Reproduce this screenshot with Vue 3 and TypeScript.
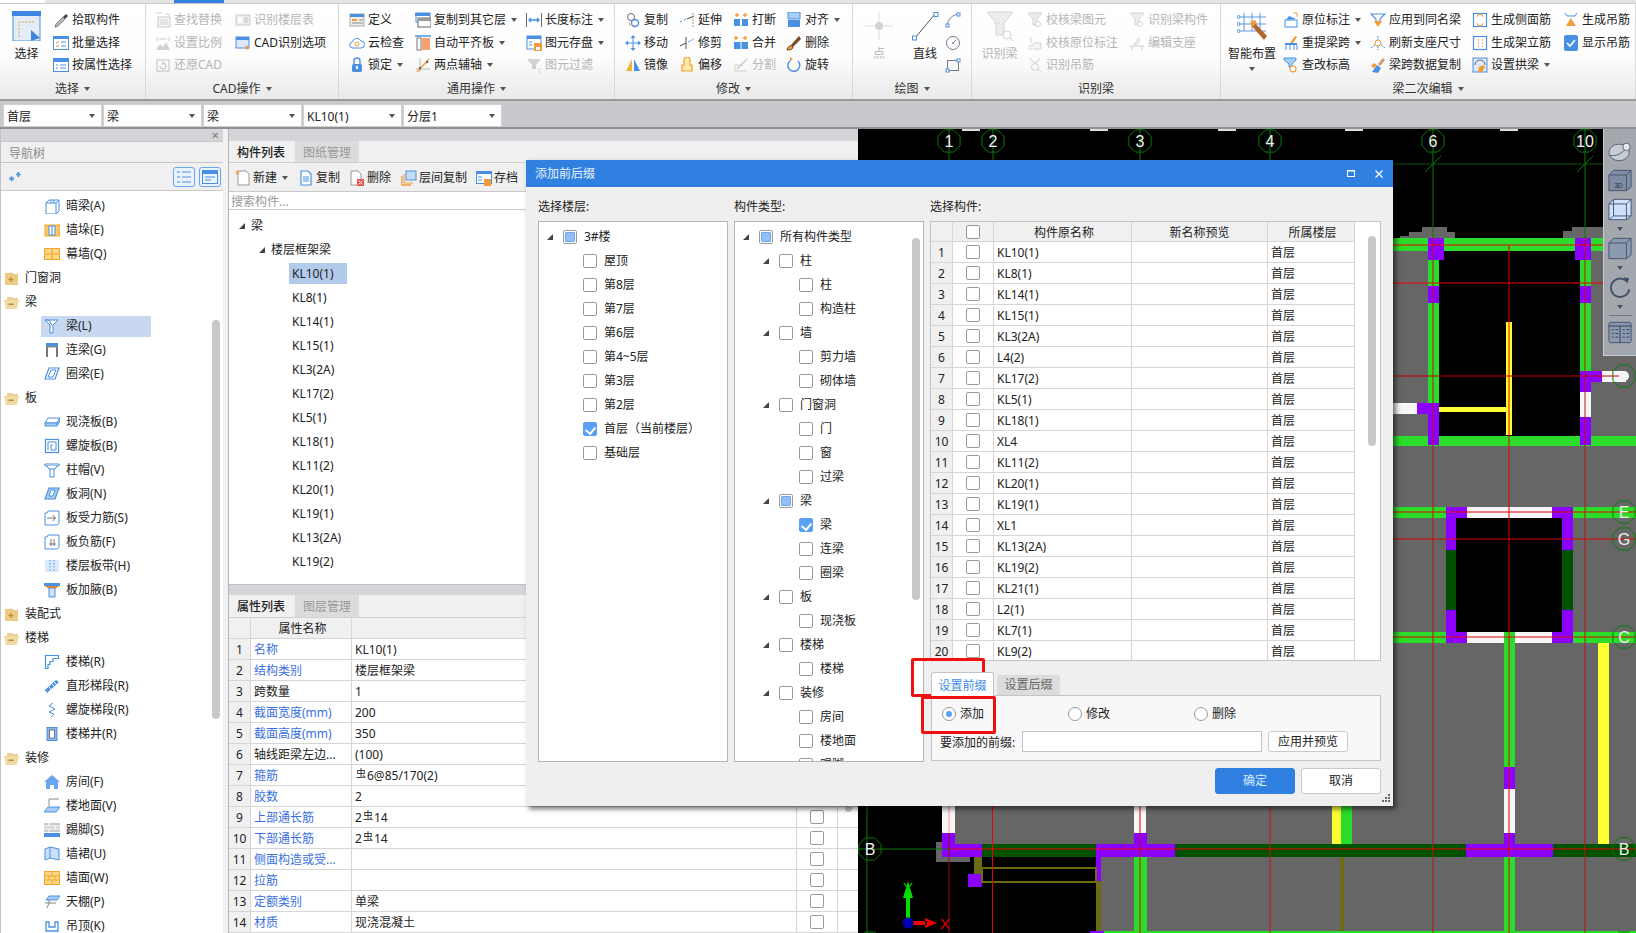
<script setup lang="ts">
// ---- icons, kept as svg fragments so the data tables below stay short
const B = '#4a90e2'
const O = '#f39a3a'
const icons: Record<string, string> = {
  pick: `<path d="M2 15l1-3 7-7 2 2-7 7z" fill="#bbb" stroke="#666" stroke-width=".8"/><path d="M10 5l3-3 2 2-3 3z" fill="#444"/>`,
  batch: `<rect x=".5" y="1.5" width="15" height="13" fill="#fff" stroke="${B}"/><rect y="1" width="16" height="3" fill="${B}"/><path d="M3 7l1 1 2-2M3 11l1 1 2-2" stroke="${O}" fill="none"/><path d="M8 7h5M8 11h5" stroke="${B}"/>`,
  attr: `<rect x=".5" y="1.5" width="15" height="13" fill="#fff" stroke="${B}"/><rect y="1" width="16" height="4" fill="${B}"/><path d="M3 8h2M7 8h6M3 11h2M7 11h6" stroke="${B}"/>`,
  find: `<rect x="3" y="5" width="12" height="10" fill="#eee" stroke="#999"/><path d="M5 8h8M5 10h8M5 12h8" stroke="#aaa"/><path d="M1 1h6M10 2h4v2" stroke="#aaa" fill="none"/>`,
  scale: `<path d="M1 15l4-6 3 3 3-5 4 8z" fill="#aaa"/><path d="M2 2v4M14 2v4M4 4h8" stroke="#999"/>`,
  restore: `<rect x="2" y="3" width="12" height="11" fill="none" stroke="#888"/><path d="M5 9a3 3 0 1 0 3-3M8 4v4" stroke="#888" fill="none"/>`,
  layertable: `<rect x="1" y="3" width="14" height="10" fill="#ddd" stroke="#999"/><rect x="3" y="5" width="4" height="6" fill="#fff"/><path d="M9 6h4M9 8h4M9 10h4" stroke="#888"/>`,
  cadopt: `<rect x="1" y="2" width="13" height="11" fill="#dbe9fa" stroke="${B}"/><rect x="1" y="2" width="13" height="3" fill="${B}"/><path d="M11 10l4 3-4 2z" fill="${O}"/>`,
  def: `<rect x="1" y="2" width="14" height="12" fill="#eee" stroke="#aaa"/><rect x="1" y="2" width="14" height="3" fill="${B}"/><rect x="3" y="7" width="5" height="2" fill="${O}"/><path d="M10 8h4M3 11h11" stroke="#888"/>`,
  cloud: `<path d="M4 13a3 3 0 0 1-.5-6A4.5 4.5 0 0 1 12 6a3.5 3.5 0 0 1 0 7z" fill="#fff" stroke="${B}"/><circle cx="8" cy="9" r="2" fill="none" stroke="${O}"/>`,
  lock: `<rect x="3" y="7" width="10" height="8" rx="1.5" fill="${B}"/><path d="M5 7V4a3 3 0 0 1 6 0v3" fill="none" stroke="${B}" stroke-width="1.4"/><rect x="7" y="9" width="2" height="3" fill="#fff"/>`,
  copyto: `<rect x="1" y="1" width="14" height="9" fill="#fff" stroke="${B}"/><rect y="1" width="15" height="3" fill="${B}"/><rect x="3" y="6" width="13" height="9" fill="#fff" stroke="#666"/><rect x="3" y="6" width="13" height="3" fill="#999"/>`,
  align: `<rect x="7" y="3" width="8" height="12" fill="#f7a26a"/><rect x="2" y="3" width="4" height="12" fill="#fff" stroke="#777"/><path d="M0 1h16" stroke="${B}" stroke-width="1.5"/>`,
  twopt: `<path d="M1 12h14M5 1v14" stroke="#bbb"/><path d="M2 15L14 2" stroke="${O}" stroke-width="1.3"/><circle cx="5" cy="11" r="1.2" fill="#666"/><circle cx="12" cy="5" r="1.2" fill="#666"/>`,
  len: `<path d="M.5 1v14M15.5 1v14" stroke="#666"/><path d="M3 8h10M5 6L3 8l2 2M11 6l2 2-2 2" stroke="${B}" fill="none" stroke-width="1.3"/>`,
  save: `<rect x="1" y="1" width="14" height="13" fill="#fff" stroke="${B}"/><rect x="1" y="1" width="14" height="3" fill="${B}"/><path d="M3 7h3M3 10h3" stroke="${B}"/><rect x="8" y="8" width="8" height="8" fill="${O}"/><rect x="10" y="12" width="4" height="3" fill="#fff"/>`,
  filter: `<path d="M1 2h14L10 8v4H6V8z" fill="#aaa"/><path d="M12 12h3M12 15h3" stroke="#aaa"/>`,
  copy: `<circle cx="6" cy="5" r="3.5" fill="none" stroke="#667"/><circle cx="10" cy="11" r="3.5" fill="none" stroke="${B}" stroke-width="1.4"/><path d="M4 10l1 4" stroke="${O}"/>`,
  extend: `<path d="M1 10l2-1M5 8l2-1" stroke="${B}"/><path d="M8 7l7-3" stroke="#444"/><path d="M14 1v14" stroke="#999" stroke-dasharray="2 1"/>`,
  breakit: `<rect x="1" y="7" width="6" height="7" fill="${B}"/><rect x="9" y="7" width="6" height="7" fill="${B}"/><path d="M4 1v4M2 3h4M12 1v4M10 3h4" stroke="${O}" stroke-width="1.3"/>`,
  alignto: `<rect x="2" y="0" width="12" height="7" fill="#a8cdf6" stroke="${B}"/><rect x="2" y="8" width="12" height="7" fill="${B}"/>`,
  move: `<path d="M8 1v14M1 8h14" stroke="${B}"/><path d="M8 0l2.5 3h-5zM8 16l2.5-3h-5zM0 8l3-2.5v5zM16 8l-3-2.5v5z" fill="${B}"/>`,
  trim: `<path d="M1 11l6-3" stroke="#444"/><path d="M9 7l6-3" stroke="${B}" stroke-dasharray="2 1"/><path d="M7 2v12" stroke="#555"/>`,
  merge: `<rect x="1" y="7" width="14" height="7" fill="${B}"/><path d="M8 7v7" stroke="#fff"/><path d="M3 1v4M1 3h4M12 1v4M10 3h4" stroke="${O}" stroke-width="1.3"/>`,
  erase: `<path d="M13 1L5 10l2 2 8-8z" fill="#7a4a22"/><path d="M1 15c1-4 3-5 5-4l1 1c0 2-2 3-6 3z" fill="${O}" stroke="#642"/>`,
  mirror: `<path d="M7 2v12H1z" fill="#f2b431"/><path d="M9 2v12h6z" fill="${B}"/>`,
  offset: `<path d="M3 14V8h2V3a2 2 0 0 1 6 0v5h2v6z" fill="#ffe9b0" stroke="#f0a020" stroke-width="1.2"/>`,
  split: `<path d="M2 14h12M2 14V8h8" stroke="#aaa" fill="none"/><path d="M4 12L14 2" stroke="#999" stroke-width="1.4"/>`,
  rotate: `<path d="M12 4a6 6 0 1 1-7-1" fill="none" stroke="${B}" stroke-width="1.4"/><path d="M4 0l3 2-3 2z" fill="${O}"/>`,
  arc: `<path d="M2 14C3 7 7 3 14 2" fill="none" stroke="#778"/><rect x="1" y="12" width="3" height="3" fill="#fff" stroke="${B}"/><rect x="12" y="1" width="3" height="3" fill="#fff" stroke="${B}"/>`,
  circ: `<circle cx="8" cy="8" r="6.5" fill="none" stroke="#778"/><path d="M8 8l3-3" stroke="#778"/><circle cx="8" cy="8" r="1" fill="${B}"/>`,
  rect: `<rect x="2.5" y="3.5" width="11" height="10" fill="none" stroke="#778"/><rect x="1" y="12" width="3" height="3" fill="#fff" stroke="${B}"/><rect x="12" y="2" width="3" height="3" fill="#fff" stroke="${B}"/>`,
  chk: `<path d="M1 1h14l-5 6v6H6V7z" fill="#ddd" stroke="#aaa"/><circle cx="11" cy="12" r="2.5" fill="#fff" stroke="#aaa"/>`,
  chk2: `<path d="M1 14h4M1 11h4l2-3h7v6H6" fill="#eee" stroke="#aaa"/><path d="M4 2v6" stroke="#aaa"/>`,
  hang: `<path d="M3 1l3 4h4l3-4" fill="none" stroke="#aaa"/><circle cx="8" cy="10" r="3.5" fill="none" stroke="#aaa"/><path d="M11 12l3 3" stroke="#aaa"/>`,
  seat: `<path d="M1 11h14M3 15V11M13 15V11" stroke="#999"/><path d="M4 10l5-8 3 3-4 5z" fill="#ccc"/>`,
  mark: `<rect x="2" y="8" width="12" height="7" fill="#fff" stroke="${B}"/><path d="M3 8l3-4 7 3" fill="${B}"/><path d="M10 1h4v4" stroke="${O}" fill="none"/>`,
  refetch: `<path d="M2 8h12v2H2z" fill="${B}"/><path d="M3 10v5M7 10v5M11 10v5M14 10v5" stroke="${B}"/><path d="M7 8l5-7 2 1-4 6z" fill="${O}"/>`,
  elev: `<path d="M1 1h12v2L9 7v3H6V7L1 3z" fill="#a8cdf6" stroke="${B}"/><circle cx="10" cy="12" r="3" fill="#fff" stroke="${O}" stroke-width="1.2"/>`,
  same: `<path d="M1 2h14L10 7v3H6V7z" fill="#fff" stroke="${B}" stroke-width="1.2"/><path d="M4 9h8l-4 6z" fill="${O}"/>`,
  refresh: `<circle cx="8" cy="8" r="3" fill="#fff" stroke="${O}"/><path d="M8 1v4M8 11v4M1 13l4-3M15 13l-4-3" stroke="${B}" stroke-dasharray="2 1"/>`,
  spandata: `<path d="M2 15l5-7 4 3-3 5z" fill="${B}"/><path d="M8 7l5-6 2 2-5 6z" fill="#c96"/><path d="M1 9l3-3 3 2-3 3z" fill="${O}"/>`,
  side: `<rect x="1.5" y="1.5" width="13" height="13" fill="#fff" stroke="${B}" stroke-width="1.2"/><path d="M5 5a1 1 0 0 1 6 0M5 11a1 1 0 0 0 6 0" fill="none" stroke="${O}"/>`,
  vert: `<rect x="1.5" y="1.5" width="13" height="13" fill="#fff" stroke="${B}" stroke-width="1.2"/><path d="M6 5h1M6 8h1M6 11h1M10 5h1M10 8h1M10 11h1" stroke="${O}" stroke-width="1.4"/>`,
  arch: `<rect x="1" y="1" width="14" height="14" fill="#dbe9fa" stroke="${B}"/><path d="M3 8a5 5 0 0 1 10 0" fill="none" stroke="#666"/><path d="M6 15l1-5 4-2 2 2-3 5z" fill="${O}"/>`,
  hanggen: `<path d="M2 1l2 3h8l2-3" fill="none" stroke="${B}"/><path d="M8 6l5 8H3z" fill="${O}"/>`,
  show: `<rect x="1" y="0" width="14" height="16" rx="2" fill="${B}"/><path d="M4 8l3 3 5-6" fill="none" stroke="#fff" stroke-width="1.6"/>`,
  // nav tree
  dark: `<path d="M2 5l3-3h10v11l-3 3H2z" fill="#fff" stroke="${B}"/><path d="M2 5h10v11M12 5l3-3M7 2v3M10 2v3" fill="none" stroke="${B}"/>`,
  pier: `<rect x="1" y="3" width="15" height="11" fill="#f8c66a" stroke="#f5a623"/><rect x="5" y="4" width="6" height="9" fill="#fff" stroke="${B}"/><path d="M8 4v9" stroke="${B}"/>`,
  curtain: `<rect x=".5" y="2.5" width="15" height="11" fill="#fcd78a" stroke="#f5a623"/><path d="M0 8h16M8 3v11" stroke="#f5a623" stroke-width="1.2"/>`,
  beam: `<path d="M1 2h13L9 7v8H6V7z" fill="#fff" stroke="${B}"/><path d="M1 2l4 0 3 5" fill="none" stroke="${B}"/>`,
  link: `<rect x="2" y="1" width="12" height="3" fill="${B}"/><rect x="2" y="4" width="12" height="1.5" fill="#888"/><path d="M3 5v10M13 5v10" stroke="#777" stroke-width="2"/>`,
  ring: `<path d="M5 2h10l-4 11H1z" fill="#fff" stroke="${B}" stroke-width="1.2"/><path d="M7 4h5l-3 7H4z" fill="none" stroke="${B}"/>`,
  slab: `<path d="M4 4h12l-3 5H1z" fill="#fff" stroke="${B}"/><path d="M1 9h12v3H1zM13 9l3-5v3l-3 5" fill="#a8cdf6" stroke="${B}"/>`,
  spiral: `<rect x="1.5" y="1.5" width="13" height="13" fill="#fff" stroke="${B}" stroke-width="1.2"/><path d="M4 12V4h8v8H7V7h2" fill="none" stroke="${B}"/>`,
  cap: `<path d="M1 2h14v2H1z" fill="#fff" stroke="${B}"/><path d="M3 4l2 3h6l2-3M6 7v8h4V7" fill="#fff" stroke="${B}"/>`,
  hole: `<path d="M5 2h10l-4 11H1z" fill="#a8cdf6" stroke="${B}" stroke-width="1.2"/><path d="M7 4h4l-2 6H5z" fill="#fff" stroke="${B}"/>`,
  rebar: `<path d="M3 3l1-2h11v12l-2 2H1V3z" fill="#fff" stroke="${B}"/><path d="M3 8h9M9 5l2 3-2 3" fill="none" stroke="#777"/>`,
  nrebar: `<path d="M3 3l1-2h11v12l-2 2H1V3z" fill="#fff" stroke="${B}"/><path d="M5 10h7M7 5v7M10 5v7" fill="none" stroke="#777"/>`,
  strip: `<rect x="1" y="2" width="14" height="12" fill="#dbe9fa"/><path d="M6 2v12M10 2v12" stroke="${B}" stroke-dasharray="1.5 1.5"/>`,
  haunch: `<path d="M0 1h16v3H0z" fill="${B}"/><path d="M1 4h14l-4 3H5z" fill="#f5821f"/><path d="M5 6h6v9H5z" fill="#cfe2f8" stroke="${B}"/>`,
  stair: `<path d="M1.5 1.5h13v3H9v3H6v3H4v4H1.5z" fill="#fff" stroke="${B}" stroke-width="1.2"/>`,
  straight: `<path d="M1 12L12 2l3 2-11 10z" fill="${B}"/><path d="M5 9l2 2M8 6l2 2M10 4l2 2" stroke="#fff"/><path d="M1 12l3 3" stroke="${B}"/>`,
  helix: `<path d="M9 1L5 4l6 3-6 3 5 2-3 3" fill="none" stroke="${B}"/>`,
  well: `<rect x="3" y="1.5" width="10" height="13" fill="#8fb6e8" stroke="${B}"/><rect x="5.5" y="4" width="5" height="8" fill="#fff" stroke="#777"/>`,
  room: `<path d="M8 1L0 8h2v7h4v-4h4v4h4V8h2z" fill="#6aa5ef"/>`,
  floor: `<path d="M5 1h10M5 1v7" stroke="#888" fill="none"/><path d="M4 9h12l-4 5H0z" fill="#a8cdf6" stroke="${B}"/>`,
  skirt: `<rect y="1" width="16" height="9" fill="#ccc"/><path d="M0 4h16M0 7h16M5 1v3M11 4v3M5 7v3" stroke="#fff"/><rect y="11" width="16" height="4" fill="${B}"/>`,
  dado: `<path d="M1 3l5-2 9 2v11l-9-2-5 2z" fill="#c9dff8" stroke="${B}"/><path d="M6 1v11" stroke="${B}"/>`,
  wall: `<rect x=".5" y="1.5" width="15" height="13" fill="#fcd78a" stroke="#f5a623"/><path d="M1 6h14M1 10h14M8 2v4M5 6v4M11 6v4M8 10v4" stroke="#f5a623"/>`,
  ceil: `<path d="M5 2h11l-3 4H2z" fill="#a8cdf6" stroke="${B}"/><path d="M1 9h11M5 6v3M3 14l2-5" stroke="#888" fill="none"/>`,
  hang2: `<path d="M2 4v9h12V4h-3v5H5V4z" fill="#fff" stroke="${B}" stroke-width="1.3"/>`,
  // list toolbar
  newone: `<path d="M3 1h8l3 3v11H3z" fill="#fff" stroke="#999"/><path d="M1 1l3 3M4 1L1 4" stroke="${O}" stroke-width="1.4"/>`,
  dup: `<path d="M3 1h7l3 3v11H3z" fill="#fff" stroke="${B}" stroke-width="1.2"/><path d="M5 7h6M5 9h6M5 11h6" stroke="${B}"/>`,
  del: `<path d="M2 1h7l3 3v11H2z" fill="#fff" stroke="#999"/><rect x="8" y="9" width="7" height="7" fill="#e8504a"/><path d="M9.5 10.5l4 4M13.5 10.5l-4 4" stroke="#fff"/>`,
  floors: `<rect x="5" y="1" width="10" height="9" fill="#c5dcf8" stroke="${B}"/><path d="M1 6v9h9" fill="none" stroke="${O}" stroke-width="1.3"/><path d="M3 4v9h9" fill="none" stroke="${O}"/>`,
  archive: `<rect x=".5" y="1.5" width="15" height="12" fill="#fff" stroke="${B}"/><rect y="1" width="16" height="3" fill="${B}"/><path d="M2 7h4M2 10h4" stroke="${B}"/><rect x="8" y="9" width="7" height="7" fill="${O}"/>`,
  folderOpen: `<path d="M3 3h5l1 1h5v2H3z" fill="#e9cf95"/><path d="M0 6h15l-2 9H2z" fill="#f0d9a5"/><rect x="4.5" y="9.5" width="5" height="1.5" fill="#b88d3f"/>`,
  folderClosed: `<path d="M1 3h5l2-1 1 2h5v11H1z" fill="#edcb85"/><path d="M7 7v5M4.5 9.5h5" stroke="#c08e35" stroke-width="1.3"/>`,
}

type Cell = { t: string; ic: string; caret?: boolean; dis?: boolean }
type Col = { w: number; big?: boolean; bigCaret?: boolean; items: Cell[] }
type Group = { title: string; w: number; caret?: boolean; pad: number; cols: Col[] }

const groups: Group[] = [
  { title: '选择', w: 146, caret: true, pad: 0, cols: [
    { w: 53, big: true, items: [{ t: '选择', ic: 'bigselect' }] },
    { w: 90, items: [{ t: '拾取构件', ic: 'pick' }, { t: '批量选择', ic: 'batch' }, { t: '按属性选择', ic: 'attr' }] },
  ] },
  { title: 'CAD操作', w: 193, caret: true, pad: 9, cols: [
    { w: 80, items: [{ t: '查找替换', ic: 'find', dis: true }, { t: '设置比例', ic: 'scale', dis: true }, { t: '还原CAD', ic: 'restore', dis: true }] },
    { w: 100, items: [{ t: '识别楼层表', ic: 'layertable', dis: true }, { t: 'CAD识别选项', ic: 'cadopt' }] },
  ] },
  { title: '通用操作', w: 276, caret: true, pad: 10, cols: [
    { w: 66, items: [{ t: '定义', ic: 'def' }, { t: '云检查', ic: 'cloud' }, { t: '锁定', ic: 'lock', caret: true }] },
    { w: 111, items: [{ t: '复制到其它层', ic: 'copyto', caret: true }, { t: '自动平齐板', ic: 'align', caret: true }, { t: '两点辅轴', ic: 'twopt', caret: true }] },
    { w: 85, items: [{ t: '长度标注', ic: 'len', caret: true }, { t: '图元存盘', ic: 'save', caret: true }, { t: '图元过滤', ic: 'filter', dis: true }] },
  ] },
  { title: '修改', w: 238, caret: true, pad: 10, cols: [
    { w: 54, items: [{ t: '复制', ic: 'copy' }, { t: '移动', ic: 'move' }, { t: '镜像', ic: 'mirror' }] },
    { w: 54, items: [{ t: '延伸', ic: 'extend' }, { t: '修剪', ic: 'trim' }, { t: '偏移', ic: 'offset' }] },
    { w: 53, items: [{ t: '打断', ic: 'breakit' }, { t: '合并', ic: 'merge' }, { t: '分割', ic: 'split', dis: true }] },
    { w: 60, items: [{ t: '对齐', ic: 'alignto', caret: true }, { t: '删除', ic: 'erase' }, { t: '旋转', ic: 'rotate' }] },
  ] },
  { title: '绘图', w: 119, caret: true, pad: 0, cols: [
    { w: 52, big: true, items: [{ t: '点', ic: 'bigpoint', dis: true }] },
    { w: 40, big: true, items: [{ t: '直线', ic: 'bigline' }] },
    { w: 20, items: [{ t: '', ic: 'arc' }, { t: '', ic: 'circ' }, { t: '', ic: 'rect' }] },
  ] },
  { title: '识别梁', w: 249, pad: 0, cols: [
    { w: 55, big: true, items: [{ t: '识别梁', ic: 'bigrec', dis: true }] },
    { w: 102, items: [{ t: '校核梁图元', ic: 'chk', dis: true }, { t: '校核原位标注', ic: 'chk2', dis: true }, { t: '识别吊筋', ic: 'hang', dis: true }] },
    { w: 90, items: [{ t: '识别梁构件', ic: 'chk', dis: true }, { t: '编辑支座', ic: 'seat', dis: true }] },
  ] },
  { title: '梁二次编辑', w: 415, caret: true, pad: 0, cols: [
    { w: 62, big: true, bigCaret: true, items: [{ t: '智能布置', ic: 'bigsmart' }] },
    { w: 87, items: [{ t: '原位标注', ic: 'mark', caret: true }, { t: '重提梁跨', ic: 'refetch', caret: true }, { t: '查改标高', ic: 'elev' }] },
    { w: 102, items: [{ t: '应用到同名梁', ic: 'same' }, { t: '刷新支座尺寸', ic: 'refresh' }, { t: '梁跨数据复制', ic: 'spandata' }] },
    { w: 91, items: [{ t: '生成侧面筋', ic: 'side' }, { t: '生成架立筋', ic: 'vert' }, { t: '设置拱梁', ic: 'arch', caret: true }] },
    { w: 70, items: [{ t: '生成吊筋', ic: 'hanggen' }, { t: '显示吊筋', ic: 'show' }] },
  ] },
]

const bigIcons: Record<string, string> = {
  bigselect: `<rect x="1" y="1" width="27" height="29" fill="#e4ecf7" stroke="#4a90e2"/><rect x="0" y="0" width="29" height="5" fill="#3e86df"/><path d="M7 26V11h16" fill="none" stroke="#f39a3a" stroke-dasharray="2 1.5"/><path d="M19 19l9 8-9 3z" fill="#3e86df"/>`,
  bigpoint: `<path d="M15 1v28M1 15h28" stroke="#bbb"/><circle cx="15" cy="15" r="4" fill="#aaa"/>`,
  bigline: `<path d="M5 27L25 3" stroke="#555"/><rect x="2.5" y="25" width="4" height="4" fill="#fff" stroke="#4a90e2"/><rect x="24" y="1.5" width="4" height="4" fill="#fff" stroke="#4a90e2"/>`,
  bigrec: `<path d="M2 1h26l-9 11v12h-8V12z" fill="#ddd" stroke="#aaa"/><path d="M9 12l6 0" stroke="#bbb"/><circle cx="22" cy="24" r="4" fill="#fff" stroke="#aaa"/><path d="M25 27l3 3" stroke="#aaa"/>`,
  bigsmart: `<path d="M7 2v18M15 2v18M23 2v18M1 6h28M1 13h28M1 20h28" stroke="#5c97e0"/><circle cx="1.5" cy="6" r="1.5" fill="#fff" stroke="#4a90e2"/><circle cx="1.5" cy="13" r="1.5" fill="#fff" stroke="#4a90e2"/><circle cx="1.5" cy="20" r="1.5" fill="#fff" stroke="#4a90e2"/><path d="M14 14l3-3 13 14-3 4z" fill="#b5652b"/><path d="M13 11l5-2 2 3-5 4z" fill="#f39a3a"/>`,
}

const combos = ['首层', '梁', '梁', 'KL10(1)', '分层1']

type NavRow = { t: string; ic: string; top?: boolean; sel?: boolean }
const navRows: NavRow[] = [
  { t: '暗梁(A)', ic: 'dark' }, { t: '墙垛(E)', ic: 'pier' }, { t: '幕墙(Q)', ic: 'curtain' },
  { t: '门窗洞', ic: 'folderClosed', top: true },
  { t: '梁', ic: 'folderOpen', top: true },
  { t: '梁(L)', ic: 'beam', sel: true }, { t: '连梁(G)', ic: 'link' }, { t: '圈梁(E)', ic: 'ring' },
  { t: '板', ic: 'folderOpen', top: true },
  { t: '现浇板(B)', ic: 'slab' }, { t: '螺旋板(B)', ic: 'spiral' }, { t: '柱帽(V)', ic: 'cap' }, { t: '板洞(N)', ic: 'hole' },
  { t: '板受力筋(S)', ic: 'rebar' }, { t: '板负筋(F)', ic: 'nrebar' }, { t: '楼层板带(H)', ic: 'strip' }, { t: '板加腋(B)', ic: 'haunch' },
  { t: '装配式', ic: 'folderClosed', top: true },
  { t: '楼梯', ic: 'folderOpen', top: true },
  { t: '楼梯(R)', ic: 'stair' }, { t: '直形梯段(R)', ic: 'straight' }, { t: '螺旋梯段(R)', ic: 'helix' }, { t: '楼梯井(R)', ic: 'well' },
  { t: '装修', ic: 'folderOpen', top: true },
  { t: '房间(F)', ic: 'room' }, { t: '楼地面(V)', ic: 'floor' }, { t: '踢脚(S)', ic: 'skirt' }, { t: '墙裙(U)', ic: 'dado' },
  { t: '墙面(W)', ic: 'wall' }, { t: '天棚(P)', ic: 'ceil' }, { t: '吊顶(K)', ic: 'hang2' },
]

const listTools = [
  { t: '新建', ic: 'newone', w: 63, caret: true },
  { t: '复制', ic: 'dup', w: 51 },
  { t: '删除', ic: 'del', w: 52 },
  { t: '层间复制', ic: 'floors', w: 75 },
  { t: '存档', ic: 'archive', w: 60 },
]
const klNames = ['KL10(1)', 'KL8(1)', 'KL14(1)', 'KL15(1)', 'KL3(2A)', 'KL17(2)', 'KL5(1)', 'KL18(1)', 'KL11(2)', 'KL20(1)', 'KL19(1)', 'KL13(2A)', 'KL19(2)']

type Prop = { n: string; v: string; plain?: boolean; sym?: string; pre?: string; box?: boolean }
const props: Prop[] = [
  { n: '名称', v: 'KL10(1)' },
  { n: '结构类别', v: '楼层框架梁' },
  { n: '跨数量', v: '1', plain: true },
  { n: '截面宽度(mm)', v: '200' },
  { n: '截面高度(mm)', v: '350' },
  { n: '轴线距梁左边...', v: '(100)', plain: true },
  { n: '箍筋', v: '6@85/170(2)', sym: '虫', pre: '' },
  { n: '胶数', v: '2' },
  { n: '上部通长筋', v: '14', sym: '虫', pre: '2', box: true },
  { n: '下部通长筋', v: '14', sym: '虫', pre: '2', box: true },
  { n: '侧面构造或受...', v: '', box: true },
  { n: '拉筋', v: '', box: true },
  { n: '定额类别', v: '单梁', box: true },
  { n: '材质', v: '现浇混凝土', box: true },
]

type TreeRow = { t: string; lv: number; arrow?: boolean; state?: 'half' | 'on' }
const floorRows: TreeRow[] = [
  { t: '3#楼', lv: 0, arrow: true, state: 'half' },
  { t: '屋顶', lv: 1 }, { t: '第8层', lv: 1 }, { t: '第7层', lv: 1 }, { t: '第6层', lv: 1 }, { t: '第4~5层', lv: 1 },
  { t: '第3层', lv: 1 }, { t: '第2层', lv: 1 }, { t: '首层（当前楼层）', lv: 1, state: 'on' }, { t: '基础层', lv: 1 },
]
const typeRows: TreeRow[] = [
  { t: '所有构件类型', lv: 0, arrow: true, state: 'half' },
  { t: '柱', lv: 1, arrow: true }, { t: '柱', lv: 2 }, { t: '构造柱', lv: 2 },
  { t: '墙', lv: 1, arrow: true }, { t: '剪力墙', lv: 2 }, { t: '砌体墙', lv: 2 },
  { t: '门窗洞', lv: 1, arrow: true }, { t: '门', lv: 2 }, { t: '窗', lv: 2 }, { t: '过梁', lv: 2 },
  { t: '梁', lv: 1, arrow: true, state: 'half' }, { t: '梁', lv: 2, state: 'on' }, { t: '连梁', lv: 2 }, { t: '圈梁', lv: 2 },
  { t: '板', lv: 1, arrow: true }, { t: '现浇板', lv: 2 },
  { t: '楼梯', lv: 1, arrow: true }, { t: '楼梯', lv: 2 },
  { t: '装修', lv: 1, arrow: true }, { t: '房间', lv: 2 }, { t: '楼地面', lv: 2 }, { t: '踢脚', lv: 2 },
]
const partNames = ['KL10(1)', 'KL8(1)', 'KL14(1)', 'KL15(1)', 'KL3(2A)', 'L4(2)', 'KL17(2)', 'KL5(1)', 'KL18(1)', 'XL4', 'KL11(2)', 'KL20(1)', 'KL19(1)', 'XL1', 'KL13(2A)', 'KL19(2)', 'KL21(1)', 'L2(1)', 'KL7(1)', 'KL9(2)']
const radios = ['添加', '修改', '删除']

// ---- drawing on the CAD canvas, in page coordinates
const GRAY = '#666666'
const PUR = '#8b00ff'
const GRN = '#2bdc2b'
const DGR = '#005200'
const WHT = '#f7f7f7'
const YEL = '#ffff33'
const OLV = '#6b6b12'
const plan: [number, number, number, number, string][] = [
  [955, 251, 681, 593, GRAY], [1101, 857, 535, 80, GRAY], [936, 842, 34, 20, GRAY],
  [1422, 227, 25, 11, GRAY], [1409, 232, 46, 6, GRAY], [1400, 236, 55, 2, GRAY],
  [1572, 227, 31, 11, GRAY], [1563, 231, 40, 7, GRAY],
  [1439, 251, 141, 185, '#000'], [1456, 518, 106, 114, '#000'],
  // upper room
  [1393, 238, 243, 13, GRN], [1428, 238, 11, 208, GRN], [1580, 238, 11, 208, GRN],
  [1428, 238, 16, 22, PUR], [1575, 238, 16, 22, PUR], [1428, 286, 11, 17, PUR], [1580, 286, 11, 17, PUR],
  [1393, 436, 243, 10, GRN],
  [1393, 403, 24, 11, WHT], [1417, 403, 22, 11, PUR], [1428, 403, 11, 42, PUR],
  [1580, 371, 22, 11, PUR], [1580, 371, 11, 21, PUR], [1580, 392, 11, 25, WHT], [1580, 417, 11, 28, PUR],
  [1602, 371, 24, 11, WHT],
  [1506, 322, 6, 113, YEL], [1439, 407, 67, 5, YEL],
  // lift shaft
  [1393, 507, 243, 11, GRN], [1446, 507, 21, 11, PUR], [1467, 507, 85, 11, WHT], [1552, 507, 21, 11, PUR],
  [1446, 518, 10, 32, PUR], [1446, 550, 10, 60, DGR], [1446, 610, 10, 33, PUR],
  [1562, 518, 11, 32, PUR], [1562, 550, 11, 60, DGR], [1562, 610, 11, 33, PUR],
  [1393, 632, 243, 11, GRN], [1446, 632, 21, 11, PUR], [1467, 632, 85, 11, WHT], [1552, 632, 21, 11, PUR],
  [1504, 632, 11, 135, GRN], [1504, 767, 11, 22, PUR], [1504, 789, 11, 44, WHT], [1504, 833, 11, 11, PUR],
  [1598, 643, 11, 201, YEL], [1332, 800, 9, 44, YEL], [1341, 800, 11, 50, GRN],
  // lower band
  [982, 844, 654, 13, DGR], [1096, 844, 79, 13, PUR], [1466, 844, 87, 13, PUR],
  [1504, 857, 11, 80, GRN], [1134, 857, 13, 80, GRN], [1340, 857, 4, 80, OLV],
  [942, 800, 13, 33, WHT], [942, 833, 13, 24, PUR], [942, 844, 40, 13, PUR],
  [1134, 800, 12, 33, WHT], [1134, 833, 13, 11, PUR],
  [974, 857, 8, 17, OLV], [968, 874, 14, 13, PUR],
  [1096, 857, 5, 24, PUR], [1096, 881, 5, 50, OLV],
  [1104, 931, 532, 6, GRN], [1090, 931, 14, 6, PUR],
]
const lines: [number, number, number, number, string][] = [
  [858, 164, 1636, 164, '#0a520a'],
  [949, 129, 949, 160, '#0a7a0a'], [993, 129, 993, 160, '#0a7a0a'], [1140, 129, 1140, 160, '#0a7a0a'], [1270, 129, 1270, 160, '#0a7a0a'],
  [1433, 129, 1433, 238, '#0a7a0a'], [1585, 129, 1585, 238, '#0a7a0a'],
  [1425, 172, 1441, 156, '#0a7a0a'], [1577, 172, 1593, 156, '#0a7a0a'],
  [1433, 238, 1433, 933, '#b01818'], [1509, 245, 1509, 933, '#e00000'], [1585, 238, 1585, 933, '#b01818'],
  [949, 800, 949, 833, '#ff9090'], [949, 833, 949, 933, '#901010'], [992.5, 800, 992.5, 933, '#f00000'], [1270, 800, 1270, 933, '#c81010'], [1140, 800, 1140, 933, '#e00000'],
  [1393, 245, 1603, 245, '#f00000'], [1393, 283, 1603, 283, '#f00000'], [1393, 376, 1625, 376, '#c00000'],
  [1393, 512, 1636, 512, '#e00000'], [1393, 539, 1636, 539, '#e00000'], [1393, 637, 1636, 637, '#e00000'],
  [950, 849, 1636, 849, '#f00000'], [858, 849, 950, 849, '#0a7a0a'], [867, 806, 867, 933, '#0a7a0a'],
]
function octagon(cx: number, cy: number, r = 12) {
  const pts: string[] = []
  for (let i = 0; i < 8; i++) {
    const a = Math.PI / 8 + (i * Math.PI) / 4
    pts.push(`${cx + r * Math.cos(a)},${cy + r * Math.sin(a)}`)
  }
  return pts.join(' ')
}
const bubbles: [number, number, string][] = [
  [949, 141, '1'], [993, 141, '2'], [1140, 141, '3'], [1270, 141, '4'], [1433, 141, '6'], [1585, 141, '10'],
  [1624, 376, ''], [1624, 512, 'E'], [1624, 539, 'G'], [1624, 637, 'C'], [1624, 849, 'B'], [1624, 943, 'A'],
  [870, 849, 'B'], [870, 943, 'A'],
]
const topBits = [962, 1090, 1218, 1345, 1500]
</script>

<template>
  <div class="app">
    <div class="top-strip"><i class="top-white"></i><i class="top-tab"></i></div>

    <div class="ribbon">
      <div v-for="g in groups" :key="g.title" class="group" :style="{ width: g.w + 'px' }">
        <div class="group-body" :style="{ paddingLeft: g.pad + 'px' }">
          <div v-for="(c, ci) in g.cols" :key="ci" class="col" :class="{ big: c.big }" :style="{ width: c.w + 'px' }">
            <template v-if="c.big">
              <svg class="big-ic" :class="{ dis: c.items[0].dis }" viewBox="0 0 30 30" v-html="bigIcons[c.items[0].ic]"></svg>
              <span class="big-text" :class="{ off: c.items[0].dis }">{{ c.items[0].t }}</span>
              <i v-if="c.bigCaret" class="caret big-caret"></i>
            </template>
            <div v-else v-for="it in c.items" :key="it.ic + it.t" class="tool" :class="{ off: it.dis }">
              <svg class="ic" :class="{ dis: it.dis }" viewBox="0 0 16 16" v-html="icons[it.ic]"></svg>
              <span v-if="it.t">{{ it.t }}</span>
              <i v-if="it.caret" class="caret"></i>
            </div>
          </div>
        </div>
        <div class="group-title">{{ g.title }}<i v-if="g.caret" class="caret"></i></div>
      </div>
    </div>

    <div class="combo-bar">
      <div v-for="(c, i) in combos" :key="i" class="combo"><span>{{ c }}</span><i class="caret"></i></div>
    </div>

    <div class="main">
      <!-- navigation tree -->
      <aside class="nav">
        <div class="strip"><span class="strip-x">×</span></div>
        <div class="nav-title">导航树</div>
        <div class="nav-tools">
          <svg class="sparks" viewBox="0 0 14 12"><path d="M0 8h6M3 5v6M8 3h6M11 0v6" stroke="#4a90e2" stroke-width="2" /></svg>
          <span class="nav-btn"><svg viewBox="0 0 16 14"><path d="M1 2h3M6 2h9M1 7h3M6 7h9M1 12h3M6 12h9" stroke="#4a90e2" fill="none" /></svg></span>
          <span class="nav-btn"><svg viewBox="0 0 16 14"><rect x=".5" y=".5" width="15" height="13" fill="none" stroke="#4a90e2" /><rect width="16" height="4" fill="#4a90e2" /><path d="M3 7h10M3 10h6" stroke="#4a90e2" /></svg></span>
        </div>
        <div class="nav-tree">
          <div v-for="r in navRows" :key="r.t" class="nav-row" :class="{ top: r.top }">
            <div class="nav-cell" :class="{ sel: r.sel }">
              <svg class="nav-ic" viewBox="0 0 16 16" v-html="icons[r.ic]"></svg>
              <span>{{ r.t }}</span>
            </div>
          </div>
          <div class="nav-scroll"></div>
        </div>
      </aside>

      <div class="mid">
        <section class="list-panel">
          <div class="strip"></div>
          <div class="tabs">
            <span class="tab on">构件列表</span><span class="tab">图纸管理</span>
          </div>
          <div class="list-tools">
            <div v-for="t in listTools" :key="t.t" class="list-tool" :style="{ width: t.w + 'px' }">
              <svg class="ic" viewBox="0 0 16 16" v-html="icons[t.ic]"></svg>
              <span>{{ t.t }}</span>
              <i v-if="t.caret" class="caret"></i>
            </div>
          </div>
          <div class="search">搜索构件...</div>
          <div class="kl-tree">
            <div class="kl-row lv0"><i class="tri"></i>梁</div>
            <div class="kl-row lv1"><i class="tri"></i>楼层框架梁</div>
            <div v-for="(k, i) in klNames" :key="k" class="kl-row lv2"><span :class="{ picked: i === 0 }">{{ k }}</span></div>
          </div>
        </section>

        <section class="prop-panel">
          <div class="strip"><span class="strip-x right">×</span></div>
          <div class="tabs">
            <span class="tab on">属性列表</span><span class="tab">图层管理</span>
          </div>
          <div class="prop-head">
            <span class="pc-n"></span><span class="pc-name">属性名称</span><span class="pc-val"></span><span class="pc-box"></span>
          </div>
          <div v-for="(p, i) in props" :key="i" class="prop-row">
            <span class="pc-n">{{ i + 1 }}</span>
            <span class="pc-name" :class="{ blue: !p.plain }">{{ p.n }}</span>
            <span class="pc-val">{{ p.pre }}<small v-if="p.sym" class="sym">{{ p.sym }}</small>{{ p.v }}</span>
            <span class="pc-box"><i v-if="p.box" class="cb"></i></span>
          </div>
          <div class="prop-scroll"></div>
        </section>
      </div>

      <div class="canvas">
        <svg class="plan" viewBox="858 129 778 804">
          <rect x="858" y="129" width="778" height="804" fill="#000" />
          <rect v-for="(r, i) in plan" :key="i" :x="r[0]" :y="r[1]" :width="r[2]" :height="r[3]" :fill="r[4]" />
          <rect x="982" y="868" width="114" height="14" fill="none" stroke="#6b6b12" stroke-width="2" />
          <rect v-for="x in topBits" :key="x" :x="x" y="129" width="18" height="2" fill="#ddd" />
          <line v-for="(l, i) in lines" :key="'l' + i" :x1="l[0]" :y1="l[1]" :x2="l[2]" :y2="l[3]" :stroke="l[4]" stroke-width="1" />
          <g v-for="b in bubbles" :key="b[0] + '-' + b[1]">
            <polygon :points="octagon(b[0], b[1])" fill="none" stroke="#0a7a0a" />
            <text :x="b[0]" :y="b[1] + 6" class="bubble">{{ b[2] }}</text>
          </g>
          <circle cx="1624" cy="376" r="5" fill="#f4f4f4" />
          <!-- ucs marker -->
          <path d="M906 923V897h4V923zM908 881l5 17h-10z" fill="#00e000" />
          <path d="M913 921h14v4h-14zM937 923l-12-5v10z" fill="#f00000" />
          <circle cx="908" cy="923" r="5.5" fill="#0000b0" />
          <text x="908" y="893" class="ucs" fill="#00c000">Y</text>
          <text x="945" y="929" class="ucs" fill="#e00000">X</text>
        </svg>
        <div class="view-bar">
          <svg class="vb" viewBox="0 0 26 24"><ellipse cx="12" cy="13" rx="11" ry="9" fill="#c7ccd4" stroke="#555f70" /><path d="M2 16c6 2 14-2 19-9" stroke="#555f70" fill="none" /><circle cx="20" cy="7" r="4" fill="#e4e7ec" stroke="#555f70" /></svg>
          <svg class="vb" viewBox="0 0 26 24"><path d="M1 6l5-5h19v18l-5 4H1z" fill="#7f8ea5" stroke="#43506a" /><path d="M1 6h19v17M20 6l5-5" fill="none" stroke="#43506a" /><text x="7" y="20" class="vb-3d">3D</text></svg>
          <svg class="vb" viewBox="0 0 26 24"><path d="M1 6l5-5h19v18l-5 4H1z" fill="#cde2fb" stroke="#43506a" /><path d="M1 6h19v17M20 6l5-5M6 1v18h19M6 19l-5 4" fill="none" stroke="#43506a" /></svg>
          <i class="vb-caret"></i>
          <svg class="vb" viewBox="0 0 26 24"><path d="M1 6l5-5h19v18l-5 4H1z" fill="#8c9ab0" stroke="#43506a" /><path d="M1 6h19v17M20 6l5-5" fill="none" stroke="#43506a" /></svg>
          <i class="vb-caret"></i>
          <svg class="vb" viewBox="0 0 26 24"><path d="M20 5a10 10 0 1 0 3 9" fill="none" stroke="#43506a" stroke-width="2" /><path d="M17 1l6 1-2 6z" fill="#43506a" /></svg>
          <i class="vb-caret"></i>
          <i class="vb-line"></i>
          <svg class="vb" viewBox="0 0 26 24"><rect x="1" y="1" width="24" height="22" rx="2" fill="#8c9ab0" stroke="#43506a" /><path d="M1 5h24M13 5v18M4 9h2M8 9h3M4 13h2M8 13h3M4 17h2M8 17h3M16 9h2M20 9h3M16 13h2M20 13h3M16 17h2M20 17h3" stroke="#2d3a52" /></svg>
        </div>
      </div>
    </div>

    <!-- modal dialog -->
    <div class="dialog">
      <div class="dlg-title">
        <span>添加前后缀</span>
        <svg class="dlg-max" viewBox="0 0 8 7"><rect x=".5" y=".5" width="7" height="6" fill="none" stroke="#fff" /><path d="M0 1h8" stroke="#fff" /></svg>
        <svg class="dlg-close" viewBox="0 0 8 8"><path d="M.5.5l7 7M7.5.5l-7 7" stroke="#fff" stroke-width="1.2" /></svg>
      </div>
      <div class="dlg-body">
        <div class="dlg-col">
          <div class="dlg-label">选择楼层:</div>
          <div class="tree-box">
            <div v-for="r in floorRows" :key="r.t" class="t-row" :style="{ paddingLeft: 8 + r.lv * 20 + 'px' }">
              <span class="t-arrow"><i v-if="r.arrow" class="tri"></i></span>
              <i class="cb" :class="r.state"></i>
              <span class="t-text">{{ r.t }}</span>
            </div>
          </div>
        </div>
        <div class="dlg-col">
          <div class="dlg-label">构件类型:</div>
          <div class="tree-box">
            <div v-for="(r, i) in typeRows" :key="i" class="t-row" :style="{ paddingLeft: 8 + r.lv * 20 + 'px' }">
              <span class="t-arrow"><i v-if="r.arrow" class="tri"></i></span>
              <i class="cb" :class="r.state"></i>
              <span class="t-text">{{ r.t }}</span>
            </div>
            <div class="type-scroll"></div>
          </div>
        </div>
        <div class="dlg-col wide">
          <div class="dlg-label">选择构件:</div>
          <div class="part-grid">
            <div class="p-row head">
              <span class="p-n"></span><span class="p-c"><i class="cb"></i></span>
              <span class="p-name">构件原名称</span><span class="p-new">新名称预览</span><span class="p-fl">所属楼层</span>
            </div>
            <div v-for="(n, i) in partNames" :key="i" class="p-row">
              <span class="p-n">{{ i + 1 }}</span><span class="p-c"><i class="cb"></i></span>
              <span class="p-name">{{ n }}</span><span class="p-new"></span><span class="p-fl">首层</span>
            </div>
            <div class="part-scroll"></div>
          </div>
          <div class="fix-tabs">
            <span class="fix-tab on">设置前缀</span><span class="fix-tab">设置后缀</span>
          </div>
          <div class="fix-box">
            <div class="radio-row">
              <label v-for="(r, i) in radios" :key="r" class="radio" :class="{ on: i === 0 }"><i></i>{{ r }}</label>
            </div>
            <div class="prefix-row">
              <span class="prefix-label">要添加的前缀:</span>
              <span class="prefix-input"></span>
              <span class="btn apply">应用并预览</span>
            </div>
          </div>
          <div class="dlg-foot">
            <span class="btn ok">确定</span>
            <span class="btn cancel">取消</span>
          </div>
        </div>
      </div>
      <svg class="grip" viewBox="0 0 9 9"><path d="M7 0h2v2H7zM4 3h2v2H4zM7 3h2v2H7zM1 6h2v2H1zM4 6h2v2H4zM7 6h2v2H7z" fill="#666" /></svg>
      <div class="mark-a"></div>
      <div class="mark-b"></div>
    </div>
  </div>
</template>

<style scoped>
.app {
  position: relative;
  width: 1636px;
  height: 933px;
  overflow: hidden;
  background: #f2f2f2;
  color: #222;
  font: 12px/16px "Noto Sans", "Noto Sans CJK SC", "Liberation Sans", sans-serif;
}

i { display: block; font-style: normal; }

.top-strip { position: relative; height: 4px; background: #e4e4e4; border-bottom: 1px solid #c9c9c9; box-sizing: border-box; }
.top-white { position: absolute; left: 0; top: 0; width: 45px; height: 3px; background: #fff; }
.top-tab { position: absolute; left: 174px; top: 0; width: 50px; height: 3px; background: #2f80e0; }

.ribbon {
  display: flex;
  height: 95px;
  background: linear-gradient(#fff 0, #fdfdfd 55%, #e9e9e9 100%);
  border-bottom: 2px solid #9a9a9a;
}
.group { box-sizing: border-box; border-right: 1px solid #d9d9d9; display: flex; flex-direction: column; }
.group-body { display: flex; height: 74px; padding-top: 5px; box-sizing: border-box; }
.group-title { height: 21px; padding-top: 1px; display: flex; align-items: center; justify-content: center; gap: 5px; color: #333; }
.col { flex: none; }
.col.big { display: flex; flex-direction: column; align-items: center; }
.big-ic { width: 30px; height: 30px; margin-top: 2px; flex: none; }
.big-text { margin-top: 5px; line-height: 16px; white-space: nowrap; }
.big-caret { margin-top: 5px; }
.tool { display: flex; align-items: center; height: 22.5px; white-space: nowrap; }
.tool .caret { margin-left: 5px; }
.ic { width: 16px; height: 16px; margin-right: 3px; flex: none; }
.dis { filter: grayscale(1); opacity: .5; }
.off { color: #b5b5b5; }
.caret { width: 0; height: 0; border: 3px solid transparent; border-top: 4px solid #555; border-bottom: 0; flex: none; }

.combo-bar { display: flex; height: 28px; background: #c8c9cd; padding: 3px 0 0 3px; box-sizing: border-box; border-bottom: 2px solid #8f9094; }
.combo {
  width: 99px; height: 23px; margin-right: 1px; box-sizing: border-box;
  background: #fff; border: 1px solid #d0d0d0; display: flex; align-items: center; justify-content: space-between; padding: 0 6px 0 3px;
}
.combo span { position: relative; top: 1px; }

.main { display: flex; height: 804px; }
.nav { position: relative; width: 223px; flex: none; background: #fff; border-left: 1px solid #c2c2c2; box-sizing: border-box; }
.strip { position: relative; height: 12px; background: #d3d5d8; }
.strip-x { position: absolute; right: 4px; top: -2px; color: #777; font-size: 13px; line-height: 16px; }
.nav-title { height: 22px; line-height: 23px; padding-left: 8px; background: #f0f0f0; color: #8a8a8a; border-top: 1px solid #c9c9c9; border-bottom: 1px solid #c9c9c9; box-sizing: border-box; }
.nav-tools { display: flex; align-items: center; height: 28px; box-sizing: border-box; background: #f0f0f0; border-bottom: 1px solid #c9c9c9; padding: 0 2px 0 8px; gap: 4px; }
.sparks { width: 12px; height: 10px; margin-right: auto; }
.nav-btn { width: 22px; height: 20px; display: flex; align-items: center; justify-content: center; box-sizing: border-box; border: 1px solid #6aa5ef; border-radius: 3px; background: #e9f2fd; }
.nav-btn svg { width: 16px; height: 14px; }
.nav-tree { position: relative; padding-top: 3px; }
.nav-row { height: 24px; padding-left: 40px; display: flex; align-items: center; box-sizing: border-box; }
.nav-row.top { padding-left: 3px; }
.nav-cell { display: flex; align-items: center; gap: 6px; height: 21px; width: 110px; padding-left: 3px; box-sizing: border-box; white-space: nowrap; }
.nav-row.top .nav-cell { gap: 5px; padding-left: 0; }
.nav-cell.sel { background: #c7d8f0; }
.nav-ic { width: 16px; height: 16px; flex: none; }
.nav-scroll { position: absolute; left: 211px; top: 129px; width: 8px; height: 399px; border-radius: 4px; background: #c8c8c8; }

.mid { width: 630px; flex: none; margin-left: 5px; background: #fff; border-left: 1px solid #b5b5b5; box-sizing: border-box; }
.list-panel { height: 456px; overflow: hidden; box-sizing: border-box; border-bottom: 1px solid #c0c0c0; }
.tabs { display: flex; height: 22px; background: #f0f0f0; border-bottom: 1px solid #d0d0d0; box-sizing: border-box; }
.tab { width: 64px; margin-right: 2px; text-align: center; line-height: 23px; color: #999; background: #dcdcdc; }
.tab.on { background: #f0f0f0; color: #222; font-weight: 500; }
.list-tools { display: flex; align-items: center; height: 29px; padding: 2px 0 0 6px; background: #f0f0f0; border-bottom: 1px solid #c9c9c9; box-sizing: border-box; }
.list-tool { display: flex; align-items: center; white-space: nowrap; flex: none; }
.list-tool .ic { margin-right: 2px; }
.list-tool .caret { margin-left: 5px; }
.search { height: 18px; line-height: 20px; padding-left: 2px; color: #999; border-bottom: 1px solid #c9c9c9; box-sizing: border-box; }
.kl-tree { padding-top: 3px; }
.kl-row { height: 24px; display: flex; align-items: center; white-space: nowrap; padding-top: 1px; box-sizing: border-box; }
.kl-row.lv0 { padding-left: 10px; }
.kl-row.lv1 { padding-left: 30px; }
.kl-row.lv2 { padding: 0 0 0 60px; }
.kl-row .tri { margin-right: 6px; }
.kl-row span { display: inline-block; line-height: 22px; height: 21px; padding: 0 4px 0 3px; min-width: 40px; }
.picked { background: #b3cbea; width: 51px; }
.tri { width: 0; height: 0; border-left: 6px solid transparent; border-bottom: 6px solid #444; flex: none; }

.prop-panel { position: relative; }
.prop-panel .strip { height: 10px; }
.prop-panel .tabs { height: 23px; }
.prop-head, .prop-row { display: flex; height: 21px; box-sizing: border-box; border-bottom: 1px solid #d6d6d6; line-height: 22px; }
.prop-head { background: #f0f0f0; }
.prop-head .pc-name { text-align: center; }
.pc-n { width: 22px; flex: none; background: #f0f0f0; text-align: center; border-right: 1px solid #d6d6d6; box-sizing: border-box; }
.pc-name { width: 101px; flex: none; padding-left: 3px; white-space: nowrap; border-right: 1px solid #d6d6d6; box-sizing: border-box; }
.pc-name.blue { color: #3a6fe0; }
.pc-val { width: 445px; flex: none; padding-left: 3px; white-space: nowrap; border-right: 1px solid #d6d6d6; box-sizing: border-box; }
.pc-box { width: 41px; flex: none; display: flex; align-items: center; justify-content: center; border-right: 1px solid #d6d6d6; box-sizing: border-box; }
.sym { font-size: 10px; position: relative; top: -3px; margin: 0 1px; }
.prop-scroll { position: absolute; left: 616px; top: 40px; width: 7px; height: 187px; background: #c8c8c8; border-radius: 4px; }

.canvas { position: relative; flex: none; width: 778px; height: 804px; overflow: hidden; }
.plan { display: block; width: 778px; height: 804px; }
.bubble { fill: #f2f2f2; font: 16px "Liberation Sans", sans-serif; text-anchor: middle; }
.ucs { font: 15px "Liberation Sans", sans-serif; text-anchor: middle; }
.view-bar { position: absolute; right: 0; top: 0; width: 33px; height: 227px; background: #a3a7ae; border-left: 1px solid #c9cbd0; border-bottom: 1px solid #c9cbd0; box-sizing: border-box; display: flex; flex-direction: column; align-items: center; padding-top: 11px; }
.vb { width: 24px; height: 23px; margin-bottom: 6px; flex: none; }
.vb-3d { font: 7px "Liberation Sans", sans-serif; fill: #1f2a40; }
.vb-caret { width: 0; height: 0; border: 3px solid transparent; border-top: 4px solid #43506a; border-bottom: 0; margin: 0 0 6px; flex: none; }
.vb-line { width: 23px; height: 1px; background: #6e7480; margin-bottom: 5px; flex: none; }

.dialog { position: absolute; left: 526px; top: 160px; width: 867px; height: 646px; background: #efefef; box-shadow: 3px 3px 5px rgba(0, 0, 0, .55); }
.dlg-title { display: flex; align-items: center; height: 27px; background: #2f80e0; color: #e8f2fd; padding-left: 9px; }
.dlg-max { width: 8px; height: 7px; margin-left: auto; }
.dlg-close { width: 8px; height: 8px; margin: 0 10px 0 20px; }
.dlg-body { display: flex; gap: 6px; padding-left: 12px; }
.dlg-col { width: 190px; flex: none; }
.dlg-col.wide { width: 451px; }
.dlg-label { height: 34px; line-height: 40px; }
.tree-box { position: relative; height: 541px; overflow: hidden; background: #fff; border: 1px solid #b4b4b4; box-sizing: border-box; padding-top: 3px; }
.t-row { display: flex; align-items: center; height: 24px; white-space: nowrap; }
.t-arrow { width: 16px; flex: none; }
.t-text { margin-left: 7px; }
.cb { width: 14px; height: 14px; box-sizing: border-box; border: 1px solid #9a9a9a; border-radius: 2px; background: #fff; flex: none; position: relative; }
.cb.half::after { content: ""; position: absolute; inset: 1px; background: #93bff6; border-radius: 1px; border: 1px solid #6aa5ef; box-sizing: border-box; }
.cb.on { background: #5aa0f5; border-color: #5aa0f5; }
.cb.on::after { content: ""; position: absolute; left: 3px; top: 1.5px; width: 5px; height: 7px; border: solid #fff; border-width: 0 2px 2px 0; transform: rotate(40deg); }
.type-scroll { position: absolute; left: 177px; top: 16px; width: 8px; height: 362px; background: #c8c8c8; border-radius: 4px; }

.part-grid { position: relative; height: 440px; overflow: hidden; background: #fff; border: 1px solid #c4c4c4; box-sizing: border-box; }
.p-row { display: flex; height: 21px; line-height: 22px; box-sizing: border-box; border-bottom: 1px solid #d6d6d6; width: 424px; }
.p-row.head { background: #f0f0f0; height: 20px; line-height: 21px; }
.p-row.head > span { text-align: center; }
.p-row > span { border-right: 1px solid #d6d6d6; box-sizing: border-box; flex: none; white-space: nowrap; }
.p-n { width: 22px; background: #f0f0f0; text-align: center; }
.p-c { width: 41px; display: flex; align-items: center; justify-content: center; }
.p-name { width: 138px; padding-left: 3px; }
.p-new { width: 136px; }
.p-fl { width: 87px; padding-left: 3px; }
.part-scroll { position: absolute; left: 437px; top: 14px; width: 8px; height: 210px; background: #c8c8c8; border-radius: 4px; }

.fix-tabs { display: flex; align-items: flex-end; height: 23px; margin-top: 11px; padding-left: 1px; }
.fix-tab { width: 63px; height: 20px; margin-left: 3px; text-align: center; line-height: 20px; background: #dcdcdc; color: #666; border-radius: 3px 3px 0 0; }
.fix-tab.on { margin-left: 0; height: 24px; line-height: 25px; background: #fff; color: #3d8be8; border: 1px solid #c4c4c4; border-bottom: 0; box-sizing: border-box; position: relative; z-index: 1; margin-bottom: -1px; }
.fix-box { height: 66px; background: #f8f8f8; border: 1px solid #c4c4c4; box-sizing: border-box; width: 450px; margin-left: 1px; }
.radio-row { display: flex; height: 36px; align-items: center; padding-left: 10px; box-sizing: border-box; }
.radio { display: flex; align-items: center; width: 126px; line-height: 18px; }
.radio i { width: 14px; height: 14px; box-sizing: border-box; border: 1px solid #999; border-radius: 50%; background: #fff; margin-right: 4px; position: relative; }
.radio.on i::after { content: ""; position: absolute; left: 3px; top: 3px; width: 6px; height: 6px; border-radius: 50%; background: #5aa0f5; }
.prefix-row { display: flex; align-items: center; height: 21px; margin-top: -1px; padding-left: 8px; }
.prefix-label { width: 82px; flex: none; position: relative; top: 1px; }
.prefix-input { width: 240px; height: 21px; box-sizing: border-box; background: #fff; border: 1px solid #c4c4c4; }
.btn { display: flex; align-items: center; justify-content: center; box-sizing: border-box; border-radius: 3px; background: #fff; border: 1px solid #c9c9c9; }
.apply { width: 80px; height: 21px; margin-left: 6px; line-height: 18px; padding-top: 1px; }
.dlg-foot { display: flex; justify-content: flex-end; gap: 6px; margin-top: 7px; }
.ok, .cancel { width: 80px; height: 26px; }
.ok { background: #2f80e0; border-color: #2f80e0; color: #d9e9fb; }
.grip { position: absolute; right: 3px; bottom: 3px; width: 9px; height: 9px; }
.mark-a, .mark-b { position: absolute; box-sizing: border-box; border: 3px solid #f01010; border-radius: 2px; }
.mark-a { left: 385px; top: 498px; width: 74px; height: 39px; }
.mark-b { left: 395px; top: 536px; width: 75px; height: 38px; }
</style>

<style>
html, body { margin: 0; padding: 0; overflow: hidden; }
</style>
